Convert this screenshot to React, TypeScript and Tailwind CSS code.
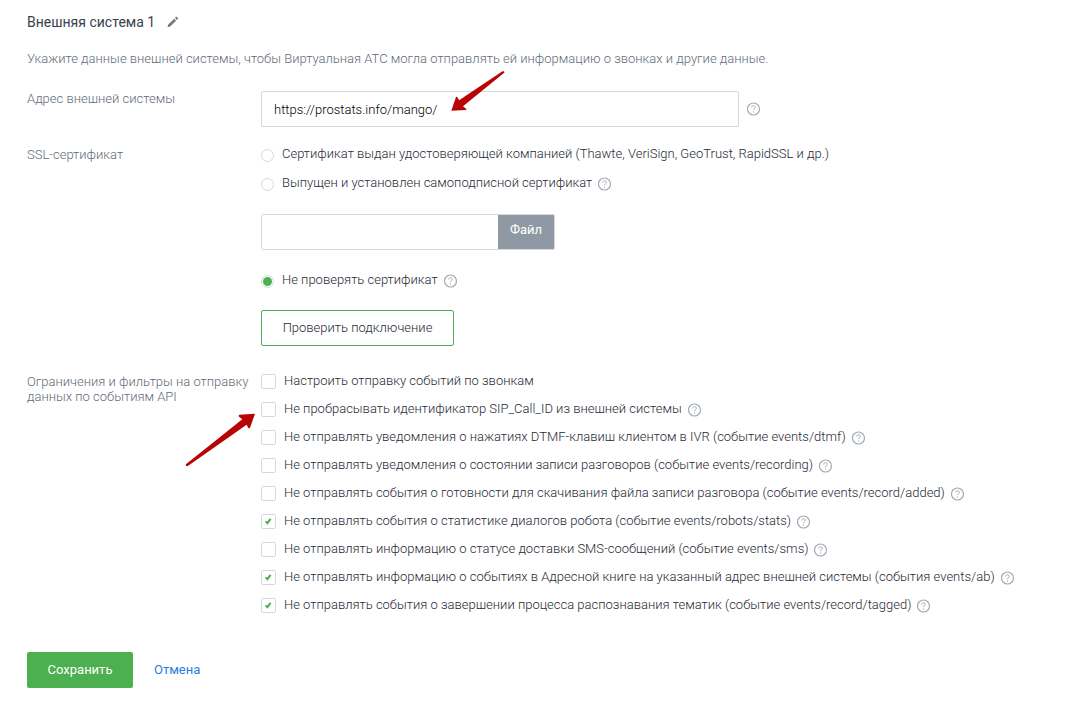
import { FormEvent, useState } from "react";

type Filter = {
  id: string;
  label: string;
  checked: boolean;
  help: boolean;
};

const initialFilters: Filter[] = [
  {
    id: "calls",
    label: "Настроить отправку событий по звонкам",
    checked: false,
    help: false,
  },
  {
    id: "sip",
    label: "Не пробрасывать идентификатор SIP_Call_ID из внешней системы",
    checked: false,
    help: true,
  },
  {
    id: "dtmf",
    label:
      "Не отправлять уведомления о нажатиях DTMF-клавиш клиентом в IVR (событие events/dtmf)",
    checked: false,
    help: true,
  },
  {
    id: "recording",
    label:
      "Не отправлять уведомления о состоянии записи разговоров (событие events/recording)",
    checked: false,
    help: true,
  },
  {
    id: "record-added",
    label:
      "Не отправлять события о готовности для скачивания файла записи разговора (событие events/record/added)",
    checked: false,
    help: true,
  },
  {
    id: "robots",
    label:
      "Не отправлять события о статистике диалогов робота (событие events/robots/stats)",
    checked: true,
    help: true,
  },
  {
    id: "sms",
    label:
      "Не отправлять информацию о статусе доставки SMS-сообщений (событие events/sms)",
    checked: false,
    help: true,
  },
  {
    id: "ab",
    label:
      "Не отправлять информацию о событиях в Адресной книге на указанный адрес внешней системы (события events/ab)",
    checked: true,
    help: true,
  },
  {
    id: "record-tagged",
    label:
      "Не отправлять события о завершении процесса распознавания тематик (событие events/record/tagged)",
    checked: true,
    help: true,
  },
];

function HelpButton() {
  return (
    <button type="button" aria-label="Справка" className="shrink-0 text-[#a3abb3]">
      <svg width="14" height="14" viewBox="0 0 14 14" fill="none" stroke="currentColor">
        <circle cx="6.5" cy="7" r="6" strokeWidth="1.2" />
        <path d="M4.7 5.5c0-1.1.8-1.8 1.8-1.8s1.8.7 1.8 1.6c0 1.3-1.8 1.5-1.8 2.9" />
        <path d="M6.5 9.4v1.2" />
      </svg>
    </button>
  );
}

type RadioRowProps = {
  value: string;
  label: string;
  selected: string;
  help?: boolean;
  onSelect: (value: string) => void;
};

function RadioRow({ value, label, selected, help, onSelect }: RadioRowProps) {
  return (
    <div className="flex h-[15px] items-end gap-1.5">
      <label className="flex items-end gap-2">
        <input
          type="radio"
          name="certificate"
          value={value}
          checked={selected === value}
          onChange={() => onSelect(value)}
          className="size-[13px] shrink-0 appearance-none rounded-full border border-[#d3d9df] bg-white bg-clip-content p-px checked:bg-[#4caf50]"
        />
        <span className="pb-0.5 leading-[13px]">{label}</span>
      </label>
      {help && <HelpButton />}
    </div>
  );
}

function FilterRow({ filter, onToggle }: { filter: Filter; onToggle: (id: string) => void }) {
  return (
    <div className="flex h-[15px] items-center gap-1.5">
      <label className="flex items-center gap-2">
        <span className="grid shrink-0">
          <input
            type="checkbox"
            checked={filter.checked}
            onChange={() => onToggle(filter.id)}
            className="peer col-start-1 row-start-1 size-[15px] appearance-none rounded-xs border border-[#d3d9df] bg-white"
          />
          <svg
            viewBox="0 0 15 15"
            className="pointer-events-none invisible col-start-1 row-start-1 size-[15px] fill-none stroke-[#4caf50] stroke-2 peer-checked:visible"
          >
            <path d="M4.6 7.4l1.8 1.8 3.2-4.4" />
          </svg>
        </span>
        <span className="pb-0.5 leading-[13px]">{filter.label}</span>
      </label>
      {filter.help && <HelpButton />}
    </div>
  );
}

export default function App() {
  const [address, setAddress] = useState("https://prostats.info/mango/");
  const [fileName, setFileName] = useState("");
  const [certificate, setCertificate] = useState("none");
  const [filters, setFilters] = useState(initialFilters);

  function toggleFilter(id: string) {
    setFilters((prev) =>
      prev.map((f) => (f.id === id ? { ...f, checked: !f.checked } : f)),
    );
  }

  function handleSubmit(event: FormEvent<HTMLFormElement>) {
    event.preventDefault();
  }

  return (
    <main className="min-h-screen bg-white px-[27px] pt-3 pb-9 font-['Roboto',sans-serif] text-[13px] font-light text-[#1f2a35]">
      <form onSubmit={handleSubmit}>
        <div className="flex h-5 items-center gap-3">
          <h1 className="text-sm font-normal text-[#37424d]">Внешняя система 1</h1>
          <button type="button" aria-label="Переименовать" className="text-[#727d88]">
            <svg width="12" height="12" viewBox="0 0 12 12" fill="currentColor">
              <path d="M.5 11.3l.7-2.9 5.9-5.7 2 2-5.9 5.8zM7.9 1.9l.9-.9q.7-.6 1.3 0l.7.7q.6.6 0 1.3l-.9.9z" />
            </svg>
          </button>
        </div>

        <p className="mt-[17px] leading-5 text-[#5f6b78]">
          Укажите данные внешней системы, чтобы Виртуальная АТС могла отправлять
          ей информацию о звонках и другие данные.
        </p>

        <div className="mt-[22px] grid grid-cols-[234px_1fr]">
          <label htmlFor="address" className="leading-[15px] text-[#5f6b78]">
            Адрес внешней системы
          </label>
          <div className="relative flex items-center gap-2">
            <input
              id="address"
              type="text"
              value={address}
              onChange={(e) => setAddress(e.target.value)}
              className="h-9 w-full max-w-[478px] rounded-xs border border-[#d3d9df] px-3 text-black outline-none"
            />
            <HelpButton />
            <svg
              width="56"
              height="42"
              viewBox="0 0 56 42"
              className="pointer-events-none absolute -top-5 left-[189px] fill-[#b80404]"
            >
              <path d="M1.3 39.7 6 26q.8-.7 1.3 0l1.8 3.2L52.5.3q1.8-.5 2 1.2L13 35.3l3.3 2.6q.3.9-.6 1z" />
            </svg>
          </div>
        </div>

        <div className="mt-5 grid grid-cols-[234px_1fr]">
          <div className="leading-[15px] text-[#5f6b78]">SSL-сертификат</div>
          <div className="flex flex-col items-start">
            <div className="flex flex-col gap-3.5">
              <RadioRow
                value="company"
                label="Сертификат выдан удостоверяющей компанией (Thawte, VeriSign, GeoTrust, RapidSSL и др.)"
                selected={certificate}
                onSelect={setCertificate}
              />
              <RadioRow
                value="self"
                label="Выпущен и установлен самоподписной сертификат"
                help
                selected={certificate}
                onSelect={setCertificate}
              />
            </div>
            <div className="my-[23px] flex h-9 overflow-hidden rounded-xs border border-[#d3d9df]">
              <input
                type="text"
                aria-label="Файл сертификата"
                value={fileName}
                onChange={(e) => setFileName(e.target.value)}
                className="w-[236px] px-3 outline-none"
              />
              <button
                type="button"
                className="w-14 bg-[#8f99a3] pb-1 font-normal text-white"
              >
                Файл
              </button>
            </div>
            <RadioRow
              value="none"
              label="Не проверять сертификат"
              help
              selected={certificate}
              onSelect={setCertificate}
            />
            <button
              type="button"
              className="mt-[22px] h-9 w-[193px] rounded-xs border border-[#4caf50]"
            >
              Проверить подключение
            </button>
          </div>
        </div>

        <div className="mt-7 grid grid-cols-[234px_1fr]">
          <div className="leading-[15px] text-[#5f6b78]">
            Ограничения и фильтры на отправку данных по событиям API
          </div>
          <div className="relative flex flex-col gap-[13px]">
            {filters.map((filter) => (
              <FilterRow key={filter.id} filter={filter} onToggle={toggleFilter} />
            ))}
            <svg
              width="71"
              height="54"
              viewBox="0 0 71 54"
              className="pointer-events-none absolute top-[39px] -left-[76px] fill-[#b80404]"
            >
              <path d="M70 .8 65 14.8q-.7 1-1.6.2l-1.8-3.2L2.5 53.2Q.7 53.4.6 51.5L57.3 6.3l-3.6-2.8q-.2-1.6.8-1.7z" />
            </svg>
          </div>
        </div>

        <div className="mt-[39px] flex items-center gap-[21px]">
          <button
            type="submit"
            className="h-9 w-[106px] rounded-xs bg-[#4caf50] font-normal text-white"
          >
            Сохранить
          </button>
          <a href="#" className="font-normal text-[#2a7de1]">
            Отмена
          </a>
        </div>
      </form>
    </main>
  );
}
